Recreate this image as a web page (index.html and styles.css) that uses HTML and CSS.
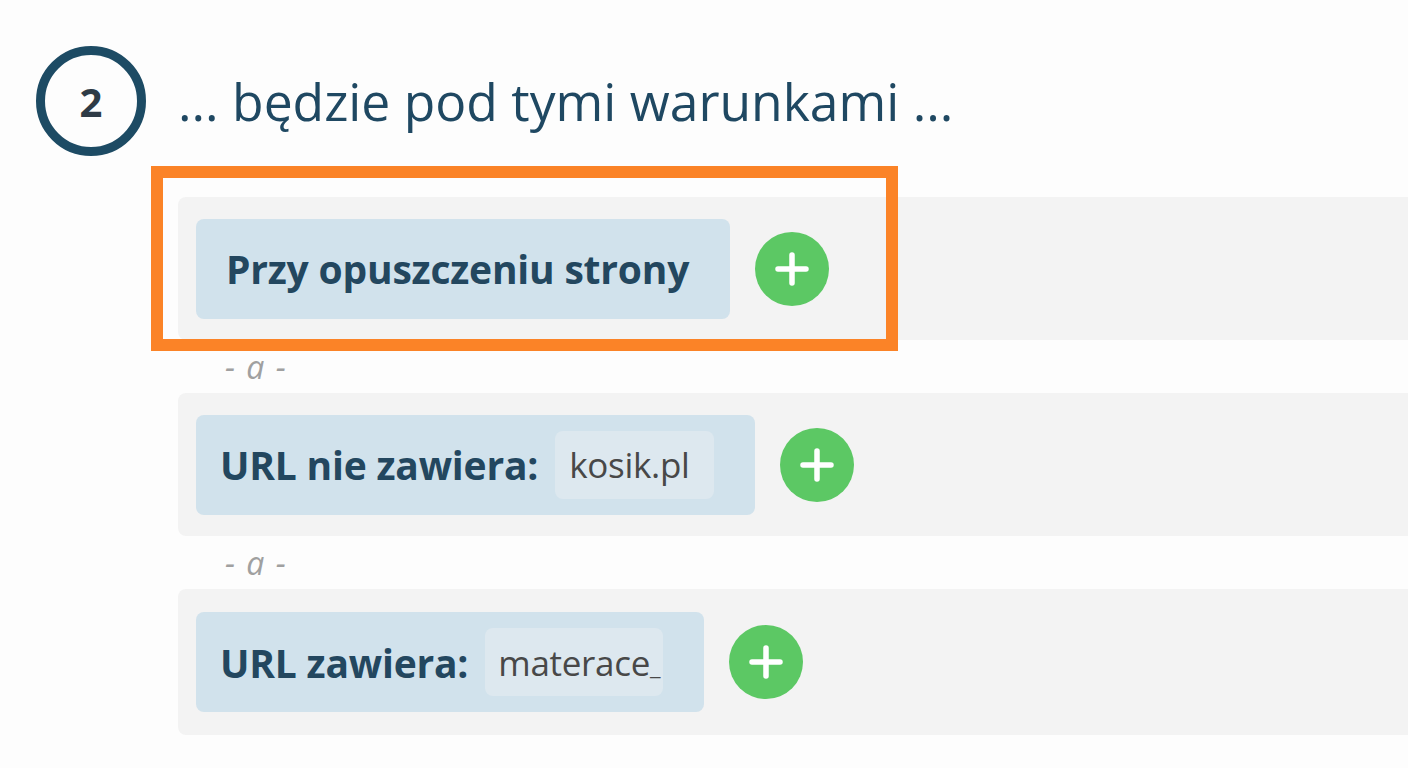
FILE: index.html
```html
<!DOCTYPE html>
<html lang="pl">
<head>
<meta charset="utf-8">
<link rel="stylesheet" href="styles.css">
</head>
<body>
<div class="page">
  <div class="header">
    <div class="step">2</div>
    <h1 class="title">... będzie pod tymi warunkami ...</h1>
  </div>
  <div class="rules">
    <div class="row first">
      <div class="highlight"></div>
      <div class="pill pill-wide"><span class="label">Przy opuszczeniu strony</span></div>
      <button class="add"><svg viewBox="0 0 74 74" width="74" height="74"><path d="M37 23V51M23 37H51" stroke="#fff" stroke-width="5.5" stroke-linecap="round"/></svg></button>
    </div>
    <div class="sep">- a -</div>
    <div class="row">
      <div class="pill"><span class="label">URL nie zawiera:</span><span class="field wide">kosik.pl</span></div>
      <button class="add"><svg viewBox="0 0 74 74" width="74" height="74"><path d="M37 23V51M23 37H51" stroke="#fff" stroke-width="5.5" stroke-linecap="round"/></svg></button>
    </div>
    <div class="sep">- a -</div>
    <div class="row last">
      <div class="pill"><span class="label">URL zawiera:</span><span class="field">materace<span class="caret">_</span></span></div>
      <button class="add"><svg viewBox="0 0 74 74" width="74" height="74"><path d="M37 23V51M23 37H51" stroke="#fff" stroke-width="5.5" stroke-linecap="round"/></svg></button>
    </div>
  </div>
</div>
</body>
</html>
```
FILE: styles.css
```css
* { box-sizing: border-box; }
html, body { margin: 0; padding: 0; }
body {
  background: #fdfdfd;
  font-family: "Open Sans", "Noto Sans", sans-serif;
  width: 1408px;
  height: 768px;
  overflow: hidden;
}
.page { padding-top: 46px; }
.header {
  display: flex;
  align-items: center;
  padding-left: 36px;
  gap: 32px;
}
.step {
  width: 110px;
  height: 110px;
  border: 9px solid #1d4b64;
  border-radius: 50%;
  display: flex;
  align-items: center;
  justify-content: center;
  font-weight: 700;
  font-size: 40px;
  color: #2e3b46;
}
.title {
  margin: 0;
  font-weight: 400;
  font-size: 51.6px;
  color: #1f4862;
}
.rules {
  margin-top: 41px;
  margin-left: 178px;
  display: flex;
  flex-direction: column;
}
.row {
  position: relative;
  height: 143px;
  background: #f3f3f3;
  border-radius: 8px 0 0 8px;
  display: flex;
  align-items: center;
  padding-left: 18px;
  gap: 25px;
}
.row.last { height: 146px; }
.highlight {
  position: absolute;
  left: -27px;
  top: -31px;
  width: 747px;
  height: 185px;
  border: 12px solid #fb8327;
  pointer-events: none;
}
.pill {
  height: 100px;
  background: #d1e2ec;
  border-radius: 8px;
  display: flex;
  align-items: center;
  padding: 0 41px 0 24px;
  gap: 17px;
}
.pill-wide { padding-left: 30px; }
.label {
  font-weight: 700;
  font-size: 39px;
  color: #23475f;
  letter-spacing: -0.2px;
}
.field {
  height: 68px;
  display: flex;
  align-items: center;
  padding: 0 3px 0 13px;
  background: #dde8ef;
  border-radius: 8px;
  font-size: 35px;
  color: #484848;
  letter-spacing: -0.3px;
}
.field.wide { padding: 0 24px 0 14px; }
.caret { font-size: 24px; align-self: flex-end; padding-bottom: 14px; }
.add {
  width: 74px;
  height: 74px;
  padding: 0;
  border: none;
  border-radius: 50%;
  background: #5cc864;
  display: flex;
  align-items: center;
  justify-content: center;
}
.add svg { display: block; }
.sep {
  height: 53px;
  display: flex;
  align-items: center;
  padding-left: 47px;
  font-style: italic;
  font-size: 32px;
  color: #a0a0a0;
  word-spacing: 3px;
}
```
